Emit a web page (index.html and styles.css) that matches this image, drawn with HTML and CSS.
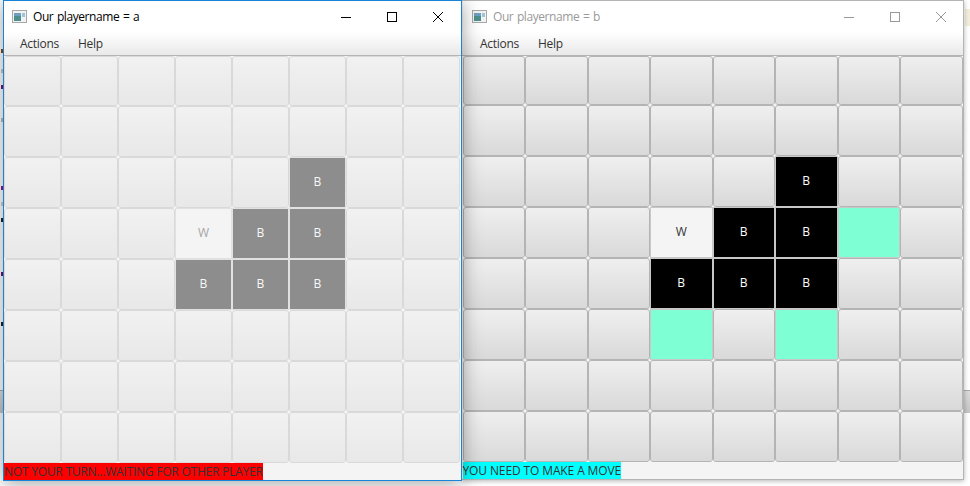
FILE: index.html
```html
<!DOCTYPE html>
<html lang="en">
<head>
<meta charset="utf-8">
<title>Two players</title>
<link rel="stylesheet" href="styles.css">
</head>
<body>
<div class="desktop">
  <div class="backbar"></div>
  <div class="specks"><i class="s1"></i><i class="s2"></i><i class="s3"></i><i class="s4"></i><i class="s5"></i><i class="s6"></i><i class="s7"></i><i class="s8"></i><i class="s9"></i></div>
  <div class="tab"></div>

  <section class="window window-a">
    <header class="titlebar">
      <svg class="appicon" width="16" height="14" viewBox="0 0 16 14"><rect x=".5" y=".5" width="14" height="12" fill="#f2f2f2" stroke="#a8a8a8"/><rect x="2" y="3" width="7" height="8" fill="#4d8f8c"/><rect x="2" y="3" width="7" height="3" fill="#6f9fc0"/><rect x="10" y="3" width="3" height="4" fill="#9fc6d8"/></svg>
      <span class="title">Our playername = a</span>
      <div class="controls">
        <svg width="12" height="12" viewBox="0 0 12 12"><path d="M1 6.5h10" stroke="#000"/></svg>
        <svg width="12" height="12" viewBox="0 0 12 12"><rect x="1.5" y="1.5" width="9" height="9" fill="none" stroke="#000"/></svg>
        <svg width="12" height="12" viewBox="0 0 12 12"><path d="M1 1l10 10M11 1L1 11" stroke="#000" fill="none"/></svg>
      </div>
    </header>
    <nav class="menubar"><span>Actions</span><span>Help</span></nav>
    <div class="board">
      <b></b><b></b><b></b><b></b><b></b><b></b><b></b><b></b>
      <b></b><b></b><b></b><b></b><b></b><b></b><b></b><b></b>
      <b></b><b></b><b></b><b></b><b></b><b class="black">B</b><b></b><b></b>
      <b></b><b></b><b></b><b class="white">W</b><b class="black">B</b><b class="black">B</b><b></b><b></b>
      <b></b><b></b><b></b><b class="black">B</b><b class="black">B</b><b class="black">B</b><b></b><b></b>
      <b></b><b></b><b></b><b></b><b></b><b></b><b></b><b></b>
      <b></b><b></b><b></b><b></b><b></b><b></b><b></b><b></b>
      <b></b><b></b><b></b><b></b><b></b><b></b><b></b><b></b>
    </div>
    <footer class="status"><span class="msg msg-wait">NOT YOUR TURN...WAITING FOR OTHER PLAYER</span></footer>
  </section>

  <section class="window window-b">
    <header class="titlebar">
      <svg class="appicon" width="16" height="14" viewBox="0 0 16 14"><rect x=".5" y=".5" width="14" height="12" fill="#f2f2f2" stroke="#a8a8a8"/><rect x="2" y="3" width="7" height="8" fill="#4d8f8c"/><rect x="2" y="3" width="7" height="3" fill="#6f9fc0"/><rect x="10" y="3" width="3" height="4" fill="#9fc6d8"/></svg>
      <span class="title">Our playername = b</span>
      <div class="controls">
        <svg width="12" height="12" viewBox="0 0 12 12"><path d="M1 6.5h10" stroke="#999"/></svg>
        <svg width="12" height="12" viewBox="0 0 12 12"><rect x="1.5" y="1.5" width="9" height="9" fill="none" stroke="#999"/></svg>
        <svg width="12" height="12" viewBox="0 0 12 12"><path d="M1 1l10 10M11 1L1 11" stroke="#999" fill="none"/></svg>
      </div>
    </header>
    <nav class="menubar"><span>Actions</span><span>Help</span></nav>
    <div class="board">
      <b></b><b></b><b></b><b></b><b></b><b></b><b></b><b></b>
      <b></b><b></b><b></b><b></b><b></b><b></b><b></b><b></b>
      <b></b><b></b><b></b><b></b><b></b><b class="black">B</b><b></b><b></b>
      <b></b><b></b><b></b><b class="white">W</b><b class="black">B</b><b class="black">B</b><b class="hint"></b><b></b>
      <b></b><b></b><b></b><b class="black">B</b><b class="black">B</b><b class="black">B</b><b></b><b></b>
      <b></b><b></b><b></b><b class="hint"></b><b></b><b class="hint"></b><b></b><b></b>
      <b></b><b></b><b></b><b></b><b></b><b></b><b></b><b></b>
      <b></b><b></b><b></b><b></b><b></b><b></b><b></b><b></b>
    </div>
    <footer class="status"><span class="msg msg-move">YOU NEED TO MAKE A MOVE</span></footer>
  </section>
</div>
</body>
</html>
```

FILE: styles.css
```css
* { box-sizing: border-box; }
html, body { margin: 0; height: 100%; background: #fff; overflow: hidden; }

.desktop {
  position: relative;
  width: 970px;
  height: 486px;
  background: #fff;
  font-family: "Open Sans", "Noto Sans", sans-serif;
  font-size: 12px;
}

.backbar {
  position: absolute;
  left: 0;
  top: 390px;
  width: 970px;
  height: 23px;
  background: linear-gradient(#dcdcdc, #c6c6c6);
  border-top: 1px solid #aaa;
}
.tab {
  position: absolute;
  left: 965px;
  top: 9px;
  width: 5px;
  height: 17px;
  background: #f3efdc;
}
.specks i { position: absolute; left: 1px; width: 2px; height: 4px; }
.s1 { top: 49px; background: #8a4a10; }
.s2 { top: 69px; background: #c8c8c8; }
.s3 { top: 85px; background: #80106a; }
.s4 { top: 118px; background: #b8bec4; }
.s5 { top: 186px; background: #a01090; }
.s6 { top: 202px; background: #d0d0d0; }
.s7 { top: 218px; background: #222; }
.s8 { top: 272px; background: #7a1060; }
.s9 { top: 322px; background: #222; }

.window {
  position: absolute;
  top: 0;
  display: flex;
  flex-direction: column;
  background: #f4f4f4;
}
.window-a {
  left: 3px;
  width: 459px;
  height: 481px;
  border: 1px solid #1883d7;
  z-index: 2;
  box-shadow: 0 2px 18px rgba(0,0,0,.38);
}
.window-b {
  left: 462px;
  width: 502px;
  height: 480px;
  border: 1px solid #b4b4b4;
  border-left: 0;
  padding-left: .5px;
  box-shadow: 0 1px 5px rgba(0,0,0,.3);
  z-index: 1;
}

.titlebar {
  display: flex;
  align-items: center;
  height: 31px;
  background: #fff;
  flex: none;
  padding-left: 8px;
}
.window-b .titlebar { padding-left: 9.5px; }
.appicon { flex: none; margin-right: 5px; }
.title { color: #000; letter-spacing: -.42px; word-spacing: .9px; }
.window-b .title { color: #9a9a9a; }
.controls {
  margin-left: auto;
  display: flex;
  gap: 34px;
  padding-right: 17px;
}
.window-b .controls { padding-right: 16px; }

.menubar {
  display: flex;
  gap: 19px;
  height: 24px;
  flex: none;
  align-items: center;
  padding-left: 16px;
  color: #333;
  letter-spacing: -.28px;
  background: linear-gradient(#fff, #e9e9e9);
  border-bottom: 1px solid #b5b5b5;
}
.window-b .menubar { margin-left: -.5px; padding-left: 18px; }

.board {
  flex: 1;
  display: grid;
  background: #f4f4f4;
}
.window-a .board {
  grid-template-columns: repeat(8, 57px);
  grid-template-rows: 50px repeat(7, 51px);
}
.window-b .board {
  grid-template-columns: repeat(8, 62.5px);
  grid-template-rows: 49px repeat(7, 51px);
}
.board b {
  display: flex;
  align-items: center;
  justify-content: center;
  padding-bottom: 2px;
  font-weight: 400;
  font-size: 12px;
  border-radius: 3px;
  border: 1px solid #b4b4b4;
  background: linear-gradient(#efefef, #d9d9d9);
  background-clip: padding-box;
}
.board .black { background: #000; color: #fff; border-color: #c8c8c8; border-radius: 0; }
.board .white { background: #f4f4f4; color: #333; border-color: #c8c8c8; border-radius: 0; }
.board .hint { background: #7fffd4; border-color: #c8c8c8; border-radius: 0; }
.window-a .board b { opacity: .42; }

.status {
  height: 17px;
  flex: none;
  display: flex;
  background: #f4f4f4;
}
.msg { display: block; color: #333; white-space: nowrap; line-height: 17px; }
.msg-wait { background: #f00; width: 259px; letter-spacing: -.22px; }
.msg-move { background: #0ff; width: 158px; letter-spacing: -.12px; }
```
